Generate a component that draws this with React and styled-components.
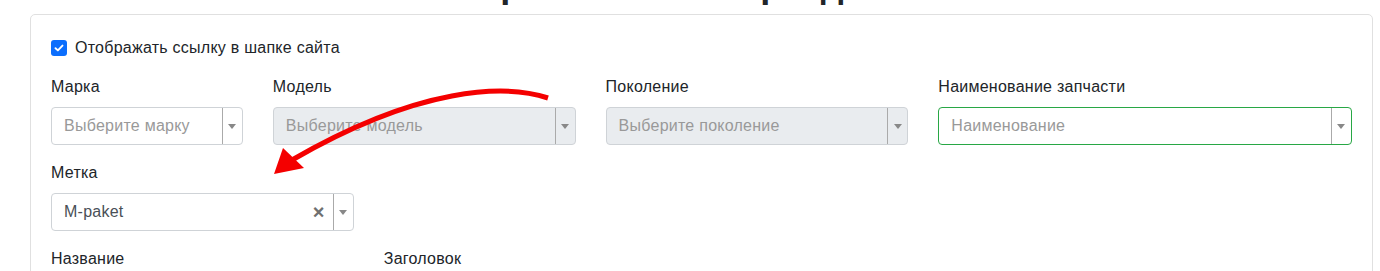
import React from "react";
import styled, { createGlobalStyle } from "styled-components";

const GlobalStyle = createGlobalStyle`
  html, body { margin: 0; padding: 0; background: #fff; }
  body {
    font-family: "Liberation Sans", Arial, sans-serif;
    font-size: 16px;
    letter-spacing: 0.25px;
    color: #212529;
    overflow: hidden;
  }
  * { box-sizing: border-box; }
`;

const Page = styled.div`
  position: relative;
  width: 1380px;
  height: 271px;
  padding: 0 7px 0 30px;
  overflow: hidden;
`;

const TitleClip = styled.div`
  height: 14px;
  overflow: hidden;
  display: flex;
  align-items: flex-end;
  justify-content: center;
`;

const Title = styled.h1`
  margin: 0 80px 11px 0;
  font-size: 36px;
  line-height: 36px;
  font-weight: 700;
  letter-spacing: 0;
  white-space: nowrap;
`;

const Card = styled.div`
  border: 1px solid #e0e0e0;
  border-radius: 5px;
  padding: 21px 20px 20px;
  height: 300px;
`;

const CheckRow = styled.label`
  display: flex;
  align-items: center;
  gap: 8px;
  line-height: 24px;
  margin-bottom: 15px;
`;

const CheckBox = styled.span`
  width: 16px;
  height: 16px;
  border-radius: 3px;
  background: #0b6efd;
  display: flex;
  align-items: center;
  justify-content: center;
`;

const Row = styled.div`
  display: flex;
  margin: 0 -15px;
`;

const Col = styled.div`
  flex: 0 0 ${(p) => (p.$span / 12) * 100}%;
  max-width: ${(p) => (p.$span / 12) * 100}%;
  padding: 0 15px;
  margin-bottom: 16px;
`;

const Label = styled.div`
  line-height: 24px;
  margin-bottom: 8px;
`;

const Select = styled.div`
  height: 38px;
  display: flex;
  align-items: stretch;
  border: 1px solid ${(p) => (p.$valid ? "#28a745" : "#cfd3d7")};
  border-radius: 4px;
  background: ${(p) => (p.$disabled ? "#e9ecef" : "#fff")};
`;

const SelectText = styled.div`
  flex: 1;
  padding-left: 12px;
  line-height: 36px;
  color: ${(p) => (p.$placeholder ? "#999" : "#495057")};
  white-space: nowrap;
  overflow: hidden;
`;

const Clear = styled.div`
  width: 28px;
  display: flex;
  align-items: center;
  justify-content: center;
  color: #707070;
  font-size: 20px;
  font-weight: 700;
`;

const ArrowBox = styled.div`
  width: 20px;
  border-left: 1px solid #aaa;
  display: flex;
  align-items: center;
  justify-content: center;
  &::after {
    content: "";
    border-top: 5px solid #888;
    border-left: 4px solid transparent;
    border-right: 4px solid transparent;
  }
`;

const Overlay = styled.svg`
  position: absolute;
  left: 0;
  top: 0;
  pointer-events: none;
`;

function SelectBox({ text, placeholder, disabled, valid, clearable }) {
  return (
    <Select $disabled={disabled} $valid={valid}>
      <SelectText $placeholder={placeholder}>{text}</SelectText>
      {clearable && <Clear>×</Clear>}
      <ArrowBox />
    </Select>
  );
}

export default function App() {
  return (
    <>
      <GlobalStyle />
      <Page>
        <TitleClip>
          <Title>Настройки ссылки раздела</Title>
        </TitleClip>
        <Card>
          <CheckRow>
            <CheckBox>
              <svg width="10" height="8" viewBox="0 0 10 8">
                <path d="M1.5 4.2 L3.9 6.4 L8.5 1.6" fill="none" stroke="#fff" strokeWidth="1.9" strokeLinecap="round" strokeLinejoin="round" />
              </svg>
            </CheckBox>
            Отображать ссылку в шапке сайта
          </CheckRow>
          <Row>
            <Col $span={2}>
              <Label>Марка</Label>
              <SelectBox text="Выберите марку" placeholder />
            </Col>
            <Col $span={3}>
              <Label>Модель</Label>
              <SelectBox text="Выберите модель" placeholder disabled />
            </Col>
            <Col $span={3}>
              <Label>Поколение</Label>
              <SelectBox text="Выберите поколение" placeholder disabled />
            </Col>
            <Col $span={4}>
              <Label>Наименование запчасти</Label>
              <SelectBox text="Наименование" placeholder valid />
            </Col>
          </Row>
          <Row>
            <Col $span={3}>
              <Label>Метка</Label>
              <SelectBox text="M-paket" clearable />
            </Col>
          </Row>
          <Row>
            <Col $span={3}>
              <Label>Название</Label>
            </Col>
            <Col $span={3}>
              <Label>Заголовок</Label>
            </Col>
          </Row>
        </Card>
        <Overlay width="1380" height="271" viewBox="0 0 1380 271">
          <path d="M548 98 C 505 84, 420 86, 292 160" fill="none" stroke="#f40000" strokeWidth="5" strokeLinecap="butt" />
          <polygon points="274,174 283,148 304,168" fill="#f40000" />
        </Overlay>
      </Page>
    </>
  );
}
